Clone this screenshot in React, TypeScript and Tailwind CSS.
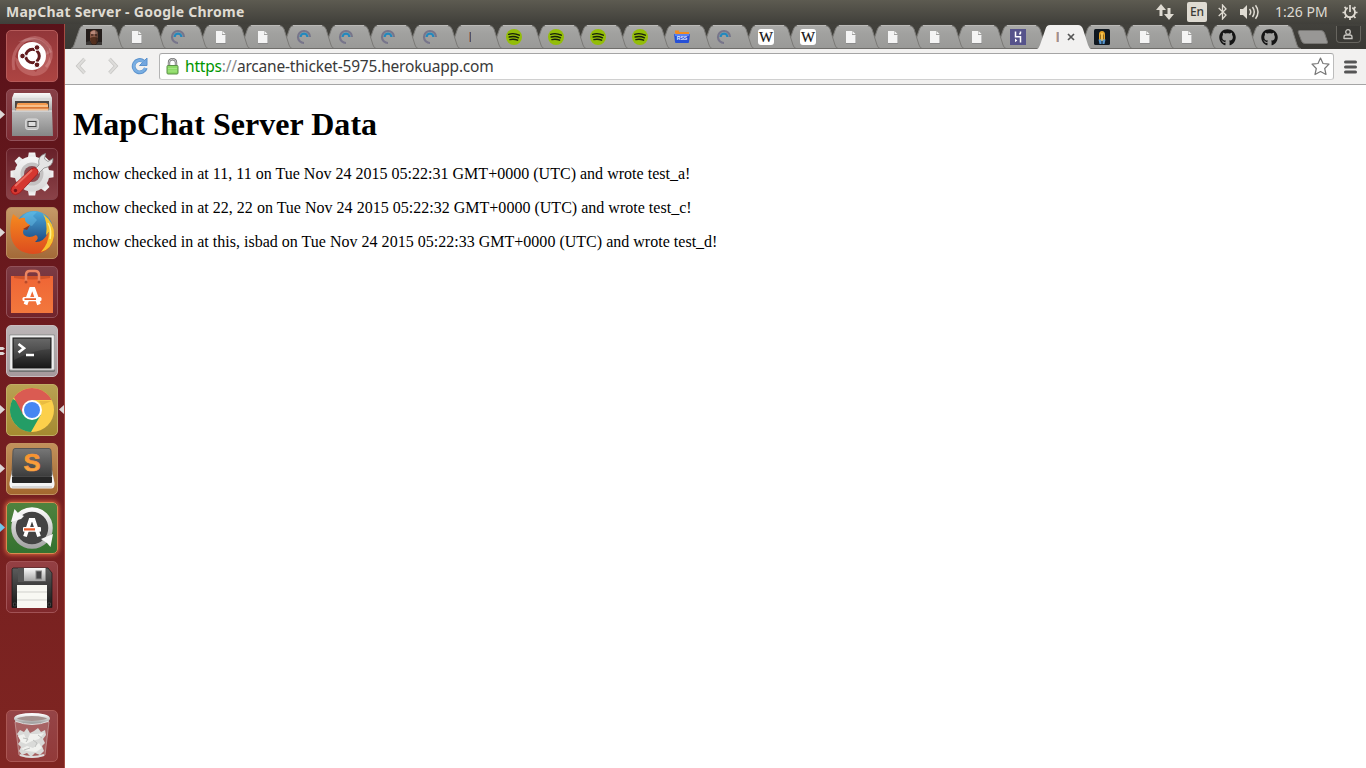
import React from 'react';
import { FaGithub } from 'react-icons/fa';

type TabKind = 'face' | 'page' | 'arc' | 'bar' | 'spotify' | 'rss' | 'wiki' | 'heroku' | 'active' | 'gold' | 'github';

const tabs: TabKind[] = [
  'face', 'page', 'arc', 'page', 'page', 'arc', 'arc', 'arc', 'arc', 'bar',
  'spotify', 'spotify', 'spotify', 'spotify', 'rss', 'arc', 'wiki', 'wiki',
  'page', 'page', 'page', 'page', 'heroku', 'active', 'gold', 'page', 'page', 'github', 'github',
];

function Favicon({ kind }: { kind: TabKind }) {
  if (kind === 'github') return <FaGithub size={17} color="#151515" className="-ml-px" />;
  return (
    <svg width="16" height="16" viewBox="0 0 16 16">
      {kind === 'face' && (
        <>
          <rect width="16" height="16" fill="#241d1b" />
          <path d="M4 3Q8-1 12 3L12 10Q11 15 8 15Q5 15 4 10Z" fill="#8b5b49" />
          <path d="M5 3Q8 0 11 3V5H5Z" fill="#b8897a" />
          <path d="M4 9Q8 7 12 9L11 14Q8 17 5 14Z" fill="#54301f" />
          <path d="M5 6H7.3M9 6H11.2" stroke="#2c1a16" strokeWidth="1.2" />
          <path d="M9 2H12V14H10Z" fill="#241d1b" fillOpacity=".35" />
          <path d="M0 13L4 12L6 16H0ZM16 13L12 13L10 16H16Z" fill="#3a3634" />
        </>
      )}
      {kind === 'page' && (
        <>
          <path d="M4 3H10V7H14V15H4Z" fill="#8a8a8a" />
          <path d="M4 2H10V6H13.500V14H4Z" fill="#f4f4f4" />
          <path d="M10.500 2L13.500 5H10.500Z" fill="#f4f4f4" />
        </>
      )}
      {kind === 'arc' && (
        <>
          <path d="M8 14A6 6 0 1 1 14 8" fill="none" stroke="#77758a" strokeWidth="2.200" />
          <path d="M4.600 8A3.400 3.400 0 0 1 11.400 8" fill="none" stroke="#2388bd" strokeWidth="2.200" />
        </>
      )}
      {kind === 'bar' && (
        <>
          <path d="M5.500 3V13" stroke="#a1795e" strokeWidth="1" />
          <path d="M6.500 3V13" stroke="#50526a" strokeWidth="1" />
        </>
      )}
      {kind === 'active' && (
        <>
          <path d="M5 3V13" stroke="#e79a50" strokeWidth="1" />
          <path d="M6 3V13" stroke="#575780" strokeWidth="1" />
        </>
      )}
      {kind === 'spotify' && (
        <>
          <circle cx="8" cy="8" r="8" fill="#93bd08" />
          <path d="M2.700 5.300Q8 3.600 13.300 6.200M3.200 8Q8 6.600 12.500 8.800M3.900 10.600Q8 9.600 11.600 11.200" fill="none" stroke="#17200a" strokeWidth="1.400" strokeLinecap="round" />
        </>
      )}
      {kind === 'rss' && (
        <>
          <path d="M2 3H15V7H2Z" fill="#f28b20" />
          <rect x="1" y="1.5" width="4" height="3" fill="#f28b20" />
          <path d="M0 5H16L15 13Q15 14 14 14H2Q1 14 1 13Z" fill="#2650d6" />
          <path d="M.5 5H15.5L15 7H1Z" fill="#5a83f1" />
          <text x="8" y="11" textAnchor="middle" fontFamily="Liberation Sans" fontWeight="bold" fontSize="5.2" fill="#e7edff">RSS</text>
        </>
      )}
      {kind === 'wiki' && (
        <>
          <rect width="16" height="16" rx="3" fill="#fff" />
          <text x="8" y="13" textAnchor="middle" fontFamily="Liberation Serif" fontSize="14.5" textLength="14" lengthAdjust="spacingAndGlyphs" fill="#111" stroke="#111" strokeWidth=".2">W</text>
        </>
      )}
      {kind === 'heroku' && (
        <>
          <rect width="16" height="16" fill="#56538b" />
          <path d="M5.500 2.500V7.800H10.500V13.500M10.500 2.500V4L9.500 5.500" fill="none" stroke="#fff" strokeWidth="1.500" />
          <path d="M5 9.500L7.300 11.400L5 13.300Z" fill="#fff" />
        </>
      )}
      {kind === 'gold' && (
        <>
          <rect width="16" height="16" rx="1.5" fill="#101820" />
          <path d="M5 12V5.500Q5 2 8 2Q11 2 11 5.500V12Z" fill="#e6a528" />
          <path d="M6.700 5.500V10M9.300 5.500V10" stroke="#6b4d12" strokeWidth=".8" />
          <path d="M8 4V12" stroke="#ffd46b" strokeWidth="1.3" />
          <path d="M4.500 10.500H7.500V15H5.500ZM8.500 10.500H11.500L10.500 15H8.500Z" fill="#5694cb" />
        </>
      )}
    </svg>
  );
}

function Tab({ kind, index }: { kind: TabKind; index: number }) {
  const active = kind === 'active';
  return (
    <div className="relative -mr-[12.02px] h-[25px] w-[54px] shrink-0" style={{ zIndex: active ? 60 : 40 - index }}>
      <svg className="absolute inset-0" width="54" height="25" viewBox="0 0 54 25">
        <defs>
          <linearGradient id="tabFill" x2="0" y2="1">
            <stop offset="0" stopColor="#aaaaa8" />
            <stop offset=".35" stopColor="#a1a19f" />
            <stop offset="1" stopColor="#999997" />
          </linearGradient>
        </defs>
        <path
          d={active ? 'M0 25Q2 24 3 21L8.500 5Q9.500 1 13 1H41Q44.500 1 46 5L51 21Q52 24 54 25Z' : 'M0 24.500Q2 24 3 21L8.500 5Q9.500 1.500 13 1.500H40Q43.500 1.500 45 5L50 21Q51 24 53 24.500Z'}
          fill={active ? '#f2f1f0' : 'url(#tabFill)'}
        />
        {!active && <path d="M0 24.500Q2 24 3 21L8.500 5Q9.500 1.500 13 1.500H40Q43.500 1.500 45 5L50 21Q51 24 53 24.500" fill="none" stroke="#7a7976" strokeWidth="1" />}
        {!active && <path d="M0 24.500H54" stroke="#6f6e6b" strokeWidth="1" />}
        {!active && <path d="M12 1.500H41" stroke="#bab9b7" strokeWidth="1" />}
      </svg>
      <div className="relative flex items-center pt-[5px] pl-[15px]">
        <Favicon kind={kind} />
        {active && (
          <svg width="8" height="8" viewBox="0 0 8 8" className="-ml-px">
            <path d="M1 1L7 7M7 1L1 7" stroke="#555" strokeWidth="1.700" />
          </svg>
        )}
      </div>
    </div>
  );
}

const gearTeeth = [0, 45, 90, 135, 180, 225, 270, 315];

function LauncherArt({ name }: { name: string }) {
  switch (name) {
    case 'ubuntu':
      return (
        <>
          <path d="M8 40Q4 20 20 10Q34 3 44 17Q48 28 40 37" fill="none" stroke="#e9a7a6" strokeOpacity=".35" strokeWidth="3" />
          <path d="M9 27Q10 44 27 46Q41 46 45 32L42 20L30 42Z" fill="#efb2af" fillOpacity=".28" />
          <path d="M12 12Q33 0 46 22L38 26L26 11Z" fill="#fff" fillOpacity=".17" />
          <circle cx="26" cy="26" r="14" fill="#fff" />
          <circle cx="26.500" cy="26" r="6.800" fill="none" stroke="#621b1d" strokeWidth="3" />
          <path d="M26.500 26L14 26M26.500 26L32.500 15.500M26.500 26L32.500 36.500" stroke="#fff" strokeWidth="1.300" />
          <g fill="#621b1d" stroke="#fff" strokeWidth="1"><circle cx="16.500" cy="26" r="2.800" /><circle cx="31" cy="17.500" r="2.800" /><circle cx="31" cy="34.800" r="2.800" /></g>
        </>
      );
    case 'files':
      return (
        <>
          <path d="M8 4H44L46 9V22H6V9Z" fill="url(#silver)" />
          <path d="M6 9H46V12H6Z" fill="#d8d8d8" />
          <path d="M9 12H43V22H9Z" fill="#4c4542" />
          <path d="M11 15L12 14H40L42 15V22H10Z" fill="#f5994c" />
          <path d="M11 17H42M9 20H43" stroke="#fae4c8" strokeWidth="1" />
          <path d="M10 19H43" stroke="#c35618" strokeWidth="1" />
          <path d="M6 21.500H46L47 47H6Z" fill="url(#metal)" />
          <path d="M6 22H46" stroke="#e3e3e3" />
          <rect x="19.700" y="30" width="12.600" height="10.500" rx="2" fill="#c2c2c2" stroke="#dcdcdc" />
          <rect x="22" y="32.500" width="8" height="5" fill="#ddd" stroke="#444" />
        </>
      );
    case 'settings':
      return (
        <>
          <g fill="url(#gear)">
            {gearTeeth.map((angle) => <path key={angle} d="M21.500 12L22.800 4.500H29.200L30.500 12Z" transform={`rotate(${angle} 26 26)`} />)}
            <circle cx="26" cy="26" r="17.500" />
          </g>
          <circle cx="26" cy="26" r="11.500" fill="#c4c2c2" />
          <circle cx="26" cy="26" r="8" fill="#8a4a50" />
          <path d="M28 22L33 17Q31 8 39.500 5.500L38.500 11L42 13.500L47 10.500Q47.500 18.500 38 20L32 26Z" fill="#e4e4e4" stroke="#8c8b8b" strokeWidth=".8" />
          <path d="M6 39L25 21Q28.500 18.500 31 21Q33.500 24 31 26.500L13.500 45Q9 48 6.500 45.500Q3.500 42.500 6 39Z" fill="#d53730" stroke="#a31418" strokeWidth=".8" />
          <path d="M9 38L26 22" stroke="#ea6f62" strokeWidth="1.800" />
          <circle cx="9.500" cy="42.500" r="1.700" fill="#77131a" />
        </>
      );
    case 'firefox':
      return (
        <>
          <circle cx="28" cy="23" r="19" fill="url(#globe)" />
          <path d="M15 11Q22 3 31 5L27 9L31 13L26 19L19 17Z" fill="#70c8ed" fillOpacity=".4" />
          <path d="M7 7Q10 9 13 12Q16 10 19 11Q18 15 24 18Q23 21 18 22Q16 25 18 28Q23 32 30 28Q34 31 29 35Q37 36 42 26Q45 26 48 24Q49 46 27 47Q9 46 5 30Q3 18 7 7Z" fill="url(#fox)" />
          <path d="M37 7Q49 16 48 29Q46 42 35 45Q43 36 43 25L40 28Q42 15 37 7Z" fill="#f7c22d" />
          <path d="M42 16Q46 23 44 32" fill="none" stroke="#fff18b" strokeWidth="1.500" />
          <path d="M17 22L24 18L21 23Z" fill="#8b351e" />
        </>
      );
    case 'software':
      return (
        <>
          <path d="M5 10H47L47 47H5Z" fill="url(#bag)" />
          <path d="M8 10H44V12Q26 15 8 12Z" fill="#a93c1b" fillOpacity=".45" />
          <path d="M20 16V9Q20 5 24 5H29Q33 5 33 9V16" fill="none" stroke="#ed8560" strokeWidth="2.500" />
          <circle cx="20" cy="16" r="1.500" fill="#b84a2a" /><circle cx="33" cy="16" r="1.500" fill="#b84a2a" />
          <path d="M19.500 38.500L25 23H27.500L33 38.500" fill="none" stroke="#fff" strokeWidth="3.800" />
          <rect x="16.500" y="31" width="19" height="4.200" rx="1.500" fill="#fff" />
          <path d="M18.500 33.200H30" stroke="#e75e2b" strokeWidth="1.700" />
        </>
      );
    case 'terminal':
      return (
        <>
          <rect x="3" y="9.500" width="46" height="37.500" rx="1.500" fill="#737373" />
          <rect x="3.700" y="10" width="44.600" height="35" rx="1" fill="#efefef" stroke="#aaa" />
          <rect x="7" y="13" width="38" height="30" fill="url(#screen)" stroke="#171717" />
          <path d="M8 14H44V24Q27 25 8 35Z" fill="#fff" fillOpacity=".08" />
          <path d="M12.500 19L18 23.200L12.500 27.500" fill="none" stroke="#fff" strokeWidth="2.600" />
          <path d="M20 30H28" stroke="#fff" strokeWidth="2.300" />
        </>
      );
    case 'chrome':
      return (
        <>
          <circle cx="26" cy="26" r="22" fill="#fcd04b" />
          <path d="M6.950 15A22 22 0 0 0 25 47.980L34.700 31L26 26Z" fill="#249d66" />
          <path d="M8 13.500A22 22 0 0 1 45.600 16H26V26L17.300 31Z" fill="#da5b52" />
          <path d="M33 17H45.600L36 21Z" fill="#a77019" fillOpacity=".2" />
          <circle cx="26" cy="26" r="10" fill="#fff" /><circle cx="26" cy="26" r="8" fill="#4787f2" />
        </>
      );
    case 'sublime':
      return (
        <>
          <path d="M6 27L3.500 40Q3 45.500 7 45.500H45Q49 45.500 48.500 40L46 27Z" fill="#f4f4f4" />
          <path d="M6 44H46" stroke="#b9b9b9" strokeWidth="1" />
          <path d="M9 5.500H43Q45 5.500 45 8L46 31Q46 34 44 34H8Q6 34 6 31L7 8Q7 5.500 9 5.500Z" fill="url(#key)" stroke="#555" />
          <path d="M6 34H46L46 39Q46 40 45 40H7Q6 40 6 39Z" fill="#262626" />
          <text x="26" y="28" textAnchor="middle" fontFamily="Liberation Sans" fontWeight="bold" fontSize="23" textLength="17" lengthAdjust="spacingAndGlyphs" fill="url(#amber)" stroke="#f79b3b" strokeWidth=".6">S</text>
        </>
      );
    case 'updater':
      return (
        <>
          <circle cx="26" cy="26" r="18.500" fill="#434343" stroke="url(#silver)" strokeWidth="4.500" />
          <path d="M5 20L8.500 7L12 11L18 14L15 17Z" fill="#f7f7f7" />
          <path d="M47 32L44.500 45L41 41L35 37Z" fill="#f7f7f7" />
          <path d="M19 34.500L24.500 18H27.500L33 34.500" fill="none" stroke="#fff" strokeWidth="3.800" />
          <rect x="17" y="25" width="18" height="4.800" rx="1" fill="#fff" />
          <path d="M18 27.400H29" stroke="#e95c2c" strokeWidth="2.200" />
        </>
      );
    case 'floppy':
      return (
        <>
          <path d="M7 7H42L46 12V46.500H6V8Z" fill="url(#screen)" stroke="#171717" strokeWidth=".7" />
          <rect x="12" y="7" width="28" height="14" fill="#555" />
          <rect x="18" y="7" width="21.500" height="13" fill="url(#silver)" />
          <rect x="30" y="10" width="5.500" height="8" fill="#454547" stroke="#888" />
          <rect x="11" y="24" width="30" height="23" fill="#f8f8f3" />
          <path d="M11 31H41M11 39H41" stroke="#cfcfcb" />
          <path d="M7.500 42H10V45H7.500ZM42 42H44.500V45H42Z" fill="#111" stroke="#666" strokeWidth=".5" />
        </>
      );
    default:
      return (
        <>
          <path d="M9 12L13 45Q26 50 39 45L43 12Z" fill="#fff" fillOpacity=".18" stroke="#d9bfbd" strokeOpacity=".55" />
          <path d="M14 45Q26 49 38 45" fill="none" stroke="#dedede" strokeWidth="2" />
          <path d="M11 24L14 20L18 22L21 18L24 23L28 21L32 18L35 22L39 20L40 25L37 29L39 33L36 36L38 41L34 45L29 43L25 47L21 43L16 45L13 41L15 37L12 34L15 30Z" fill="#d9dad8" />
          <path d="M12 26L18 24L21 31L24 24L31 24L38 23L33 29L26 31L20 34L15 32ZM15 39L21 36L27 38L33 33L36 38L30 42L21 41Z" fill="#f0f1ee" />
          <path d="M17 28L22 29L20 32M27 30L31 33L29 37M18 40L24 38M32 25L36 28" fill="none" stroke="#bec0be" strokeWidth="1" />
          <ellipse cx="26" cy="8.500" rx="16.500" ry="4" fill="#a5918e" stroke="url(#silver)" strokeWidth="3" />
          <path d="M9 11Q26 18 43 11" fill="none" stroke="#ddd" strokeWidth="1" />
        </>
      );
  }
}

const launchers = [
  { name: 'ubuntu', tile: 'bg-linear-to-b from-[#93373a] to-[#ad4442] border-[#b65b5a]', tick: '' },
  { name: 'files', tile: 'bg-linear-to-b from-[#874047] to-[#7d2b33] border-[#92525a]', tick: 'one' },
  { name: 'settings', tile: 'bg-linear-to-b from-[#682029] to-[#8b4248] border-[#85434a]', tick: '' },
  { name: 'firefox', tile: 'bg-linear-to-b from-[#c69a68] to-[#a36a38] border-[#bb8d60]', tick: 'one' },
  { name: 'software', tile: 'bg-linear-to-b from-[#7b3b44] to-[#71232b] border-[#925159]', tick: '' },
  { name: 'terminal', tile: 'bg-linear-to-b from-[#bbb5b7] to-[#a6999c] border-[#c9bdc0]', tick: 'two' },
  { name: 'chrome', tile: 'bg-linear-to-b from-[#b9a253] to-[#a58a30] border-[#c1ae65]', tick: 'one' },
  { name: 'sublime', tile: 'bg-linear-to-b from-[#c2915b] to-[#a4682f] border-[#c39361]', tick: 'one' },
  { name: 'updater', tile: 'bg-linear-to-b from-[#4f823e] to-[#347230] border-[#d98a50] shadow-[0_0_4px_1px_#d9663f]', tick: 'blue' },
  { name: 'floppy', tile: 'bg-linear-to-b from-[#944044] to-[#80292c] border-[#a25255]', tick: '' },
];

function Launcher({ name, tile, tick }: { name: string; tile: string; tick: string }) {
  return (
    <div className="relative flex h-[52px] w-16 shrink-0 justify-center">
      <div className={`flex size-[52px] overflow-hidden rounded-[5px] border ${tile}`}>
        <svg className="-m-px size-[52px] shrink-0" viewBox="0 0 52 52"><LauncherArt name={name} /></svg>
      </div>
      {tick && (
        <svg className="absolute top-[20px] left-0" width="6" height="12" viewBox="0 0 6 12">
          {tick === 'two'
            ? <path d="M0 2H3L5 3.500L3 5H0ZM0 7H3L5 8.500L3 10H0Z" fill="#ddd7d6" />
            : <path d="M0 1L5 5.500L0 10Z" fill={tick === 'blue' ? '#6fc5eb' : '#ddd7d6'} />}
        </svg>
      )}
      {name === 'chrome' && (
        <svg className="absolute top-[20px] right-0" width="5" height="12" viewBox="0 0 5 12"><path d="M5 1L0 5.500L5 10Z" fill="#ddd7d6" /></svg>
      )}
    </div>
  );
}

function Gradients() {
  const entries = [
    ['silver', '#fafafa', '#a5a5a5'], ['metal', '#bdbdbd', '#868686'], ['gear', '#f5f5f5', '#d7d7d7'],
    ['bag', '#ef6535', '#f2783d'], ['screen', '#5c5c5c', '#181818'], ['key', '#777777', '#3b3b3b'],
    ['fox', '#f58a1f', '#dd4c1e'], ['globe', '#4cabdd', '#14366f'], ['amber', '#f58a24', '#ffb14f'],
  ];
  return (
    <svg className="absolute size-0" aria-hidden="true">
      <defs>
        {entries.map(([id, from, to]) => (
          <linearGradient key={id} id={id} x2="0" y2="1"><stop stopColor={from} /><stop offset="1" stopColor={to} /></linearGradient>
        ))}
      </defs>
    </svg>
  );
}

function SystemBar() {
  return (
    <header className="flex h-6 shrink-0 items-center justify-between bg-linear-to-b from-[#5d5b51] to-[#403f3a] pl-1.5 pr-[8px] text-[#dfdbd2]">
      <span className="whitespace-nowrap font-['Noto_Sans'] text-[14px] leading-6 font-bold tracking-[0.26px]">MapChat Server - Google Chrome</span>
      <div className="flex h-6 items-center">
        <svg width="18" height="16" viewBox="0 0 18 16" className="mr-[13px]"><path d="M5 0L10 6H6.500V12H3.500V6H0ZM13 16L8 10H11.500V4H14.500V10H18Z" fill="#dfdbd2" /></svg>
        <span className="mr-[11px] flex h-5 w-5 items-center justify-center rounded-[2px] bg-[#dfdbd2] font-['Noto_Sans'] text-[12px] font-medium text-[#3c3b37]">En</span>
        <svg width="9" height="16" viewBox="0 0 9 16" className="mr-[13px]"><path d="M.700 4L8 11L4.500 15V1L8 5L.700 12" fill="none" stroke="#dfdbd2" strokeWidth="1.300" /></svg>
        <svg width="20" height="16" viewBox="0 0 20 16" className="mr-[15px]">
          <path d="M0 5H3L7 1V15L3 11H0Z" fill="#dfdbd2" />
          <path d="M9.500 5Q12 8 9.500 11M12.500 3Q16 8 12.500 13M15.500 1.300Q20.500 8 15.500 14.700" fill="none" stroke="#dfdbd2" strokeWidth="1.500" />
        </svg>
        <span className="mr-[13px] w-[54px] whitespace-nowrap font-['Noto_Sans'] text-[14px] leading-[22px] tracking-[0.020px]">1:26 PM</span>
        <svg width="16" height="16" viewBox="0 0 16 16">
          <path d="M5.700 3.800A5 5 0 1 0 10.300 3.800" fill="none" stroke="#dfdbd2" strokeWidth="1.800" />
          <path d="M8 1V8" stroke="#dfdbd2" strokeWidth="1.700" />
          <path d="M.500 8.500H3M13 8.500H15.500M2.500 3L4.500 4.800M13.500 3L11.500 4.800M2.500 14L4.500 12M13.500 14L11.500 12M8 13V16" stroke="#dfdbd2" strokeWidth="1.700" />
        </svg>
      </div>
    </header>
  );
}

function TabStrip() {
  return (
    <div className="flex h-[25px] shrink-0 bg-linear-to-b from-[#42413c] to-[#3a3935] pl-[6px]">
      {tabs.map((kind, i) => <Tab key={i} kind={kind} index={i} />)}
      <svg width="32" height="16" viewBox="0 0 32 16" className="mt-[5px] ml-[8px] shrink-0">
        <path d="M2.500 1.500H24Q26.500 1.500 27.500 4L30.500 13Q31 14.500 29 14.500H8Q5.500 14.500 4.500 12L1.300 3.500Q.700 1.500 2.500 1.500Z" fill="#989795" stroke="#777673" />
      </svg>
      <div className="mt-[2px] ml-[7px] flex h-[17px] w-[25px] shrink-0 items-center justify-center rounded-b-[4px] border border-t-0 border-[#67655f] bg-[#3a3935]">
        <svg width="10" height="11" viewBox="0 0 10 11"><circle cx="5" cy="3" r="2.300" fill="none" stroke="#c8c6c1" strokeWidth="1.300" /><path d="M1 10V8Q1 6 3 6H7Q9 6 9 8V9.500H1Z" fill="none" stroke="#c8c6c1" strokeWidth="1.300" /></svg>
      </div>
    </div>
  );
}

function Toolbar() {
  return (
    <div className="flex h-9 shrink-0 items-center border-b border-[#a5a5a5] bg-[#f2f1f0] pl-[10px] pr-[9px]">
      <svg width="12" height="18" viewBox="0 0 12 18" className="-mt-px"><path d="M9.500 2L3 9L9.500 16" fill="none" stroke="#c7c6c4" strokeWidth="3.500" /><path d="M9.500 2L3 9L9.500 16" fill="none" stroke="#dedddb" strokeWidth="1.900" /></svg>
      <svg width="12" height="18" viewBox="0 0 12 18" className="-mt-px ml-5"><path d="M2.500 2L9 9L2.500 16" fill="none" stroke="#c7c6c4" strokeWidth="3.500" /><path d="M2.500 2L9 9L2.500 16" fill="none" stroke="#dedddb" strokeWidth="1.900" /></svg>
      <svg width="18" height="18" viewBox="0 0 18 18" className="-mt-px ml-[12px]">
        <path d="M14.800 11A6.200 6.200 0 1 1 12.500 4.200" fill="none" stroke="#5b92cd" strokeWidth="3.800" />
        <path d="M16 1V8.500H8.500Z" fill="#72a6df" stroke="#5b92cd" />
        <path d="M14.300 11A5.900 5.900 0 1 1 12.500 4.700" fill="none" stroke="#79aee2" strokeWidth="2.400" />
      </svg>
      <div className="ml-[10px] flex h-[27px] flex-1 items-center rounded-[3px] border border-t-[#a5a5a5] border-r-[#bcbcbc] border-b-[#d0d0d0] border-l-[#b4b4b4] bg-white pl-[6px] pr-[3px]">
        <svg width="13" height="17" viewBox="0 0 13 17">
          <path d="M3 8V4.500Q3 1.200 6.500 1.200Q10 1.200 10 4.500V8" fill="none" stroke="#777" strokeWidth="2.400" />
          <path d="M3 8V4.500Q3 1.200 6.500 1.200Q10 1.200 10 4.500V8" fill="none" stroke="#ddd" strokeWidth=".8" />
          <rect x="1" y="7.500" width="11" height="8.500" rx="1" fill="#8cda66" stroke="#5b8f48" />
          <path d="M2 10.500H11M2 13H11" stroke="#a5e684" />
        </svg>
        <span className="-mt-[2px] ml-[6px] flex-1 whitespace-nowrap font-['Noto_Sans'] text-[15.5px] leading-[22px] tracking-[-0.190px] text-[#3a3a3a]"><span className="text-[#009500]">https</span><span className="text-[#8a8a8a]">://</span>arcane-thicket-5975.herokuapp.com</span>
        <svg width="19" height="19" viewBox="0 0 19 19"><path d="M9.500 1L12 6.500L18 7.200L13.700 11.500L15 17.500L9.500 14.500L4 17.500L5.300 11.500L1 7.200L7 6.500Z" fill="#fff" stroke="#777" strokeWidth="1.200" strokeLinejoin="round" /></svg>
      </div>
      <svg width="13" height="14" viewBox="0 0 13 14" className="ml-[10px]"><path d="M1.500 2H11.500M1.500 7H11.500M1.500 12H11.500" stroke="#555" strokeWidth="3" strokeLinecap="round" /></svg>
    </div>
  );
}

const entries = [
  'mchow checked in at 11, 11 on Tue Nov 24 2015 05:22:31 GMT+0000 (UTC) and wrote test_a!',
  'mchow checked in at 22, 22 on Tue Nov 24 2015 05:22:32 GMT+0000 (UTC) and wrote test_c!',
  'mchow checked in at this, isbad on Tue Nov 24 2015 05:22:33 GMT+0000 (UTC) and wrote test_d!',
];

export default function App() {
  return (
    <div className="relative flex h-[768px] w-[1366px] flex-col overflow-hidden bg-white">
      <Gradients />
      <SystemBar />
      <div className="flex min-h-0 flex-1">
        <aside className="flex w-[65px] shrink-0 flex-col border-r border-[#a54c43] bg-linear-to-b from-[#591219] via-[#721d20] to-[#7f2521] pt-1.5 pb-1.5">
          <div className="flex flex-col gap-[7px]">
            {launchers.map((item) => <Launcher key={item.name} {...item} />)}
          </div>
          <div className="mt-auto"><Launcher name="trash" tile="bg-linear-to-b from-[#954447] to-[#923a39] border-[#aa5754]" tick="" /></div>
        </aside>
        <main className="flex min-w-0 flex-1 flex-col">
          <TabStrip />
          <Toolbar />
          <section className="flex flex-1 flex-col bg-white px-2 pt-[21px] font-['Liberation_Serif'] text-black">
            <h1 className="text-[32px] leading-[37px] font-bold tracking-[0.040px]">MapChat Server Data</h1>
            <div className="mt-[22px] flex flex-col gap-4">
              {entries.map((entry) => <p key={entry} className="text-[16px] leading-[18px] tracking-[0.014px]">{entry}</p>)}
            </div>
          </section>
        </main>
      </div>
    </div>
  );
}
